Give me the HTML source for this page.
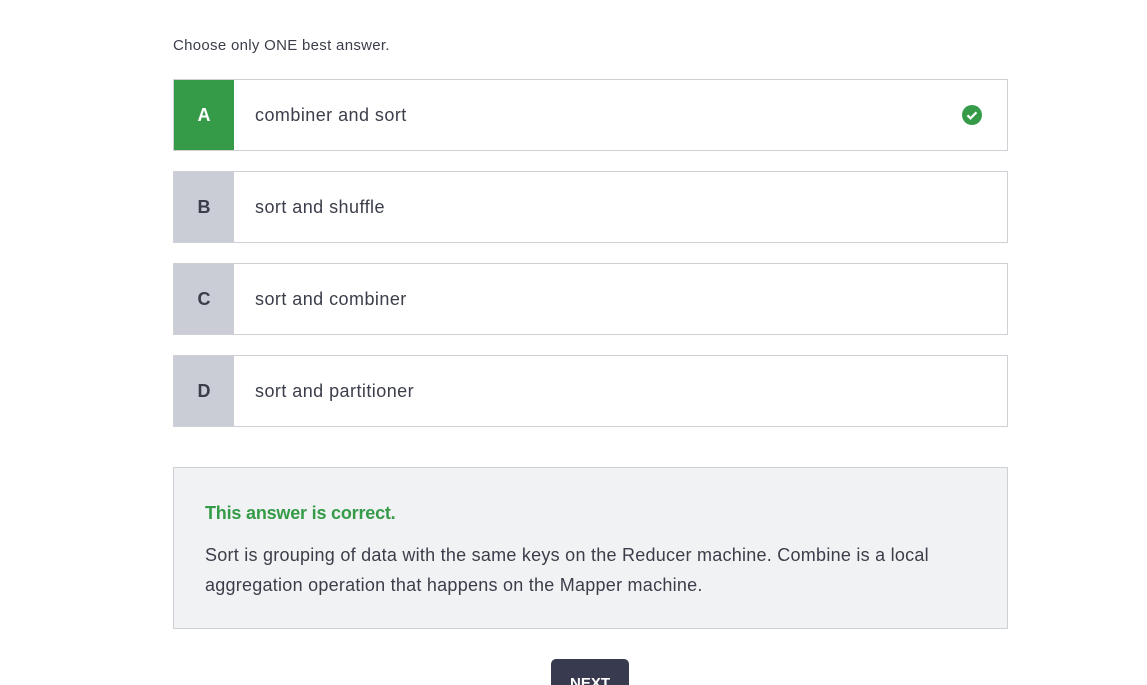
<!DOCTYPE html>
<html><head><style>
html,body{margin:0;width:1147px;height:685px;overflow:hidden}
body{background:#fff;font-family:"Liberation Sans",sans-serif;color:#3b3e4a;position:relative}
.q{position:absolute;left:173px;top:37px;font-size:15px;letter-spacing:0.3px}
.opt{position:absolute;left:173px;width:833px;height:70px;border:1px solid #cfd0d6;box-sizing:content-box}
.opt .l{position:absolute;left:0;top:0;width:60px;height:70px;background:#cbcdd6;font-weight:bold;font-size:18px;text-align:center;line-height:70px;color:#3b3e4a}
.opt .t{position:absolute;left:81px;top:0;line-height:70px;font-size:18px;letter-spacing:0.45px}
.box{position:absolute;left:173px;top:467px;width:833px;height:160px;border:1px solid #cfd0d6;background:#f1f2f4}
.ok{position:absolute;left:31px;top:35px;color:#369b48;font-weight:bold;font-size:18px;letter-spacing:-0.2px}
.ex{position:absolute;left:31px;top:72px;font-size:18px;line-height:30px;width:790px;letter-spacing:0.25px}
.btn{position:absolute;left:551px;top:659px;width:78px;height:40px;background:#383a4f;border-radius:5px;color:#fff;font-weight:bold;font-size:15px;text-align:center;line-height:50px}
</style></head><body>
<div class="q">Choose only ONE best answer.</div>
<div class="opt" style="top:79px"><div class="l" style="background:#369b48;color:#fff">A</div><div class="t">combiner and sort</div>
<svg style="position:absolute;left:788px;top:25px" width="20" height="20" viewBox="0 0 20 20"><circle cx="10" cy="10" r="10" fill="#369b48"/><path d="M5.5 10.3l3 3 6-6" stroke="#fff" stroke-width="2.2" fill="none"/></svg></div>
<div class="opt" style="top:171px"><div class="l">B</div><div class="t">sort and shuffle</div></div>
<div class="opt" style="top:263px"><div class="l">C</div><div class="t">sort and combiner</div></div>
<div class="opt" style="top:355px"><div class="l">D</div><div class="t">sort and partitioner</div></div>
<div class="box"><div class="ok">This answer is correct.</div><div class="ex">Sort is grouping of data with the same keys on the Reducer machine. Combine is a local aggregation operation that happens on the Mapper machine.</div></div>
<div class="btn">NEXT</div>
</body></html>
